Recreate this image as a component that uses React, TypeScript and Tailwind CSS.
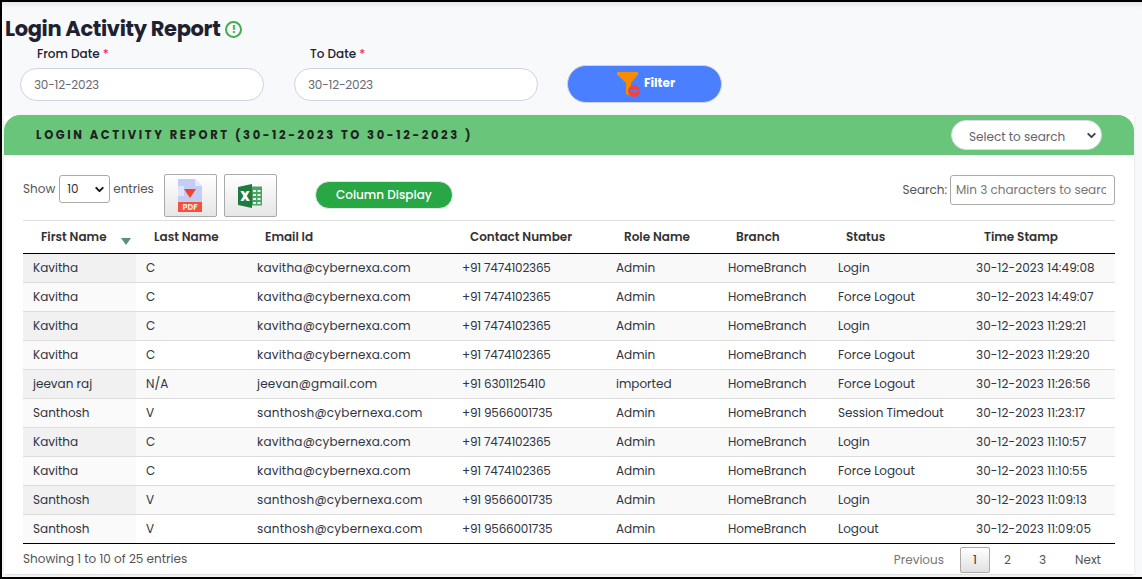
import { ChevronDown } from "lucide-react";

const rows = [
  ["Kavitha", "C", "kavitha@cybernexa.com", "+91 7474102365", "Admin", "HomeBranch", "Login", "30-12-2023 14:49:08"],
  ["Kavitha", "C", "kavitha@cybernexa.com", "+91 7474102365", "Admin", "HomeBranch", "Force Logout", "30-12-2023 14:49:07"],
  ["Kavitha", "C", "kavitha@cybernexa.com", "+91 7474102365", "Admin", "HomeBranch", "Login", "30-12-2023 11:29:21"],
  ["Kavitha", "C", "kavitha@cybernexa.com", "+91 7474102365", "Admin", "HomeBranch", "Force Logout", "30-12-2023 11:29:20"],
  ["jeevan raj", "N/A", "jeevan@gmail.com", "+91 6301125410", "imported", "HomeBranch", "Force Logout", "30-12-2023 11:26:56"],
  ["Santhosh", "V", "santhosh@cybernexa.com", "+91 9566001735", "Admin", "HomeBranch", "Session Timedout", "30-12-2023 11:23:17"],
  ["Kavitha", "C", "kavitha@cybernexa.com", "+91 7474102365", "Admin", "HomeBranch", "Login", "30-12-2023 11:10:57"],
  ["Kavitha", "C", "kavitha@cybernexa.com", "+91 7474102365", "Admin", "HomeBranch", "Force Logout", "30-12-2023 11:10:55"],
  ["Santhosh", "V", "santhosh@cybernexa.com", "+91 9566001735", "Admin", "HomeBranch", "Login", "30-12-2023 11:09:13"],
  ["Santhosh", "V", "santhosh@cybernexa.com", "+91 9566001735", "Admin", "HomeBranch", "Logout", "30-12-2023 11:09:05"],
];

const columns = [
  { name: "First Name", width: "w-[113px]", cell: "" },
  { name: "Last Name", width: "w-[111px]", cell: "" },
  { name: "Email Id", width: "w-[205px]", cell: "tracking-[0.22px]" },
  { name: "Contact Number", width: "w-[154px]", cell: "tracking-[-0.2px]" },
  { name: "Role Name", width: "w-[112px]", cell: "" },
  { name: "Branch", width: "w-[110px]", cell: "" },
  { name: "Status", width: "w-[138px]", cell: "" },
  { name: "Time Stamp", width: "w-[149px]", cell: "tracking-[0.1px]" },
];

function FilterIcon() {
  return (
    <svg width="24" height="25" viewBox="0 0 24 25" className="shrink-0">
      <path d="M0 0h21v2.500l-7 8.500v13l-5-2V11L0 2.500z" fill="#f78c00" />
      <circle cx="17" cy="19" r="6" fill="#ef4444" />
      <rect x="13.500" y="18" width="7" height="2" fill="#4a80ff" />
    </svg>
  );
}

function PdfIcon() {
  return (
    <svg width="24" height="33" viewBox="0 0 24 33">
      <path d="M0 0h17l7 7v17H0z" fill="#c3cdf5" />
      <path d="M17 0l7 7h-7z" fill="#e6e9fb" />
      <path d="M0 7h6v10H0z" fill="#e0e4fa" />
      <path d="M6 10h12l-6 9z" fill="#f0432f" />
      <rect y="23" width="24" height="10" fill="#f4503a" />
      <text x="12" y="31" textAnchor="middle" fontSize="8" fontWeight="700" fill="#ffe4df" fontFamily="Poppins, Inter, sans-serif">
        PDF
      </text>
    </svg>
  );
}

function ExcelIcon() {
  return (
    <svg width="24" height="24" viewBox="0 0 24 24">
      <path d="M9 2.500h15v19H9z" fill="#4aa564" />
      <path d="M15 6h3v2h-3zM19.500 6h3v2h-3zM15 10h3v2h-3zM19.500 10h3v2h-3zM15 14h3v2h-3zM19.500 14h3v2h-3zM15 18h3v2h-3zM19.500 18h3v2h-3z" fill="#e8f5ec" />
      <path d="M0 3L14 0v24L0 21z" fill="#1f7a3d" />
      <text x="7" y="16.500" textAnchor="middle" fontSize="13" fontWeight="800" fill="#fff" fontFamily="Poppins, Inter, sans-serif">
        X
      </text>
    </svg>
  );
}

export default function App() {
  return (
    <div className="h-[579px] w-[1142px] overflow-hidden border-y-2 border-l-2 border-black bg-[#f8f9fb] font-['Poppins','Inter','Liberation_Sans',sans-serif] text-[#212529] shadow-[inset_0_7px_6px_-6px_rgba(0,0,0,0.12)]">
      <div className="pl-[3px] pt-[14px]">
        <h1 className="flex items-center gap-[5px] text-[21px] leading-[26px] font-bold tracking-[-0.35px] text-[#1d2130]">
          Login Activity Report
          <span className="flex h-[17px] w-[17px] items-center justify-center rounded-full border-2 border-[#3fae4a] text-[11px] font-bold leading-none tracking-normal text-[#3fae4a]">
            !
          </span>
        </h1>
      </div>

      <div className="flex items-start pl-[18px] pt-[3px]">
        <div className="w-[244px]">
          <label className="block pl-[17px] text-[12px] leading-[18px] font-medium text-[#1d2130]">
            From Date <span className="text-[#ff2d55]">*</span>
          </label>
          <div className="mt-[5px] flex h-[33px] items-center rounded-full border border-[#ccd3df] bg-white pl-[13px] text-[12px] tracking-[-0.2px] text-[#666c78]">
            30-12-2023
          </div>
        </div>
        <div className="ml-[30px] w-[244px]">
          <label className="block pl-[16px] text-[12px] leading-[18px] font-medium text-[#1d2130]">
            To Date <span className="text-[#ff2d55]">*</span>
          </label>
          <div className="mt-[5px] flex h-[33px] items-center rounded-full border border-[#ccd3df] bg-white pl-[13px] text-[12px] tracking-[-0.2px] text-[#666c78]">
            30-12-2023
          </div>
        </div>
        <button className="ml-[29px] mt-[20px] flex h-[38px] w-[155px] items-center justify-center gap-[3px] rounded-full border border-[#d0d3da] bg-[#4a80ff] pl-[3px] text-[12px] font-bold text-white">
          <FilterIcon />
          <span className="-mt-[3px]">Filter</span>
        </button>
      </div>

      <div className="ml-[2px] mt-[12px] w-[1130px] bg-white shadow-sm">
        <div className="flex h-[40px] items-center justify-between rounded-t-[16px] bg-[#68c57a] pl-[32px] pr-[32px]">
          <span className="pt-[1px] text-[11.500px] font-bold tracking-[2.65px] text-[#212121]">
            LOGIN ACTIVITY REPORT (30-12-2023 TO 30-12-2023 )
          </span>
          <div className="flex h-[30px] w-[151px] items-center justify-between rounded-full border border-[#d8dde4] bg-white pl-[17px] pr-[3px] text-[12px] text-[#5f6570]">
            <span className="pt-[3px]">Select to search</span>
            <ChevronDown size={13} strokeWidth={3.5} className="text-[#3b4048]" />
          </div>
        </div>

        <div className="px-[19px]">
          <div className="flex h-[65px] items-start pt-[20px] text-[12px] text-[#555]">
            <div className="flex h-[28px] items-center">
              <span>Show</span>
              <div className="ml-[4px] mr-[3px] flex h-[28px] w-[51px] items-center justify-between rounded-[3px] border border-[#aaa] bg-white pl-[7px] pr-[3px] text-[#333]">
                10
                <ChevronDown size={13} strokeWidth={3.5} className="text-[#111]" />
              </div>
              <span>entries</span>
            </div>
            <button className="ml-[10px] -mt-[1px] flex h-[43px] w-[53px] items-center justify-center rounded-[2px] border border-[#aaa] bg-gradient-to-b from-white to-[#e6e6e6]">
              <PdfIcon />
            </button>
            <button className="ml-[7px] -mt-[1px] flex h-[43px] w-[53px] items-center justify-center rounded-[2px] border border-[#aaa] bg-gradient-to-b from-white to-[#e6e6e6]">
              <ExcelIcon />
            </button>
            <button className="ml-[38px] mt-[6px] flex h-[28px] w-[138px] items-center justify-center rounded-full border border-[#e2e6ea] bg-[#28a745] text-[12px] font-medium text-white">
              Column Display
            </button>
            <div className="ml-auto flex items-center gap-[3px]">
              <span>Search:</span>
              <div className="flex h-[30px] w-[165px] items-center overflow-hidden whitespace-nowrap rounded-[3px] border border-[#aaa] bg-white pl-[5px] pr-[8px] text-[#777]">
                <span className="overflow-hidden">Min 3 characters to search</span>
              </div>
            </div>
          </div>

          <table className="w-[1092px] table-fixed border-collapse text-[12px]">
            <thead>
              <tr className="h-[33px] border-t border-b border-t-[#ddd] border-b-black">
                {columns.map((c, i) => (
                  <th key={c.name} className={`${c.width} relative pl-[18px] text-left font-semibold text-[#333]`}>
                    {c.name}
                    {i === 0 && (
                      <span className="absolute right-[5px] top-[17px] h-0 w-0 border-x-[5px] border-t-[7px] border-x-transparent border-t-[#5f8f70]" />
                    )}
                  </th>
                ))}
              </tr>
            </thead>
            <tbody>
              {rows.map((row, r) => (
                <tr key={r} className="h-[29px] border-b border-[#ddd] last:border-black">
                  {row.map((cell, i) => {
                    const odd = r % 2 === 0;
                    const bg = i === 0 ? (odd ? "bg-[#f1f1f1]" : "bg-[#fafafa]") : odd ? "bg-[#f9f9f9]" : "bg-white";
                    return (
                      <td key={i} className={`whitespace-nowrap pl-[10px] ${bg} ${columns[i].cell} text-[#2f3542]`}>
                        {cell}
                      </td>
                    );
                  })}
                </tr>
              ))}
            </tbody>
          </table>

          <div className="flex h-[30px] items-center justify-between text-[12px] text-[#555]">
            <span>Showing 1 to 10 of 25 entries</span>
            <div className="flex items-center pt-[2px]">
              <span className="mr-[16px] text-[#777]">Previous</span>
              <span className="flex h-[26px] w-[30px] items-center justify-center rounded-[2px] border border-[#aaa] bg-gradient-to-b from-white to-[#e0e0e0] text-[#333]">
                1
              </span>
              <span className="w-[35px] text-center">2</span>
              <span className="w-[35px] text-center">3</span>
              <span className="ml-[15px] mr-[14px]">Next</span>
            </div>
          </div>
        </div>
      </div>
    </div>
  );
}
